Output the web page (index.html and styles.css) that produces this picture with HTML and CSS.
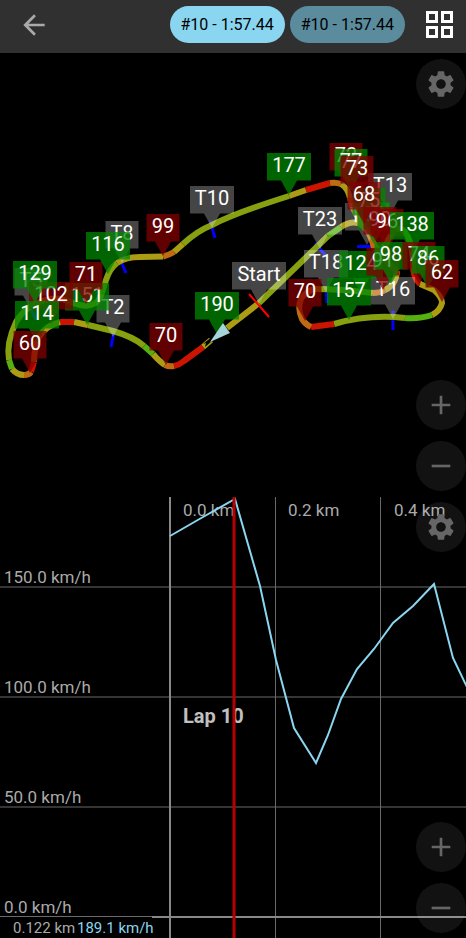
FILE: index.html
```
<!DOCTYPE html>
<html lang="en">
<head>
    <meta charset="UTF-8">
    <meta name="viewport" content="width=device-width, initial-scale=1.0">
    <title>Lap 10</title>
    <link rel="stylesheet" href="styles.css">
</head>
<body>
    <header class="topbar">
        <button type="button" class="icon-button back" aria-label="Back">
            <svg class="icon" viewBox="0 0 24 24"><path d="M20 11H7.83l5.59-5.59L12 4l-8 8 8 8 1.41-1.41L7.83 13H20z"/></svg>
        </button>
        <div class="laps">
            <button type="button" class="lap active">#10 - 1:57.44</button>
            <button type="button" class="lap">#10 - 1:57.44</button>
        </div>
        <button type="button" class="icon-button layout" aria-label="Layout">
            <svg class="layout-icon" viewBox="0 0 27 27"><path d="M1.5 1.5h9v9h-9zM16.5 1.5h9v9h-9zM1.5 16.5h9v9h-9zM16.5 16.5h9v9h-9z"/></svg>
        </button>
    </header>

    <main>
        <section class="panel">
            <svg class="map" viewBox="0 53 466 443" role="img" aria-label="Track map">
                <defs>
                    <path id="pin2" d="M-16.5-42h33v27.500h-8.500L0 0-8-14.500h-8.500z"/>
                    <path id="pin3" d="M-22-42h44v27.500h-14L0 0-8-14.500h-14z"/>
                    <path id="pinStart" d="M-27-42h54v27.500h-19L0 0-8-14.500h-19z"/>
                </defs>

                <!-- turn and start marks -->
                <path class="turn" d="M210 221l5 17M120 259l6 14M114 332l-3 15M28 303l8 17M315 243l11 13M326 286l1 17M393 311v19M357 246.500h17"/>

                <!-- track, coloured by acceleration -->
                <g class="track">
                    <path class="olive" d="M259 303L227 328M211 340L203 347"/>
                    <path class="red" d="M203 347L184 361Q179 365 174 366"/>
                    <path class="orange" d="M174 366Q169 367 165 365"/>
                    <path class="olive" d="M165 365Q160 362 153 354"/>
                    <path class="green" d="M153 354L144 346"/>
                    <path class="lime" d="M144 346Q134 337 113 331L88 325"/>
                    <path class="olive" d="M88 325L74 322"/>
                    <path class="red" d="M74 322H60"/>
                    <path class="olive" d="M60 322Q45 326 39 337"/>
                    <path class="orange" d="M39 337Q34 348 34 362"/>
                    <path class="red" d="M34 362L31 372"/>
                    <path class="orange" d="M31 372Q29 375 24 375"/>
                    <path class="olive" d="M24 375Q17 375 12 369"/>
                    <path class="green" d="M12 369L9 360"/>
                    <path class="lime" d="M9 360Q6 343 16 322 25 306 45 300"/>
                    <path class="orange" d="M45 300Q58 296 71 302"/>
                    <path class="lime" d="M71 302Q92 311 100 298 103 290 106 280 110 268 117 263"/>
                    <path class="olive" d="M117 263Q126 257 140 257L163 256.500"/>
                    <path class="orange" d="M163 256.500Q169 255 174 252"/>
                    <path class="olive" d="M174 252L183 244"/>
                    <path class="lime" d="M183 244Q197 231 212 225 235 213 289 196"/>
                    <path class="olive" d="M289 196L306 190"/>
                    <path class="red" d="M306 190L330 183"/>
                    <path class="orange" d="M330 183Q336 182 341 184"/>
                    <path class="olive" d="M341 184Q348 188 350 198"/>
                    <path class="orange" d="M350 198Q354 216 366 226L376 248"/>
                    <path class="green" d="M376 248Q384 250 388 240 396 222 405 232 412 241 413 262"/>
                    <path class="red" d="M413 262Q412 277 420 284"/>
                    <path class="olive" d="M420 284L434 290Q442 297 442 303 440 311 432 315"/>
                    <path class="green" d="M432 315Q420 319 405 318"/>
                    <path class="lime" d="M405 318Q369 314 334 324"/>
                    <path class="red" d="M334 324L311 327"/>
                    <path class="orange" d="M311 327Q306 325 302 319 297 308 301 299 306 291 315 289"/>
                    <path class="lime" d="M315 289Q340 289 373 293"/>
                    <path class="orange" d="M373 293Q380 293 385 290"/>
                    <path class="olive" d="M385 290Q396 285 397 271"/>
                    <path class="red" d="M397 271Q386 262 374 248"/>
                    <path class="orange" d="M374 248Q369 227 358 223"/>
                    <path class="olive" d="M358 223Q350 221 341 227"/>
                    <path class="green" d="M341 227L328 236"/>
                    <path class="lime" d="M328 236L259 303"/>
                </g>
                <path class="start-line" d="M249 294l20 23"/>

                <!-- turns -->
                <g class="pin turn-pin" transform="translate(31 310)"><use href="#pin2"/><text y="-23">T5</text></g>
                <g class="pin turn-pin" transform="translate(113 337)"><use href="#pin2"/><text y="-23">T2</text></g>
                <g class="pin turn-pin" transform="translate(122 263)"><use href="#pin2"/><text y="-23">T8</text></g>
                <g class="pin turn-pin" transform="translate(212 228)"><use href="#pin3"/><text y="-23">T10</text></g>
                <g class="pin turn-pin" transform="translate(390 215)"><use href="#pin3"/><text y="-23">T13</text></g>
                <g class="pin turn-pin" transform="translate(393 319)"><use href="#pin3"/><text y="-23">T16</text></g>
                <g class="pin turn-pin" transform="translate(326 292)"><use href="#pin3"/><text y="-23">T18</text></g>
                <g class="pin turn-pin" transform="translate(367 245)"><use href="#pin3"/><text y="-23">T19</text></g>
                <g class="pin turn-pin" transform="translate(320 249)"><use href="#pin3"/><text y="-23">T23</text></g>
                <g class="pin turn-pin" transform="translate(259 304)"><use href="#pinStart"/><text y="-23">Start</text></g>

                <!-- speeds -->
                <g class="pin fast" transform="translate(217 334)"><use href="#pin3"/><text y="-23">190</text></g>
                <g class="pin slow" transform="translate(166 365)"><use href="#pin2"/><text y="-23">70</text></g>
                <g class="pin fast" transform="translate(87 325)"><use href="#pin3"/><text y="-23">151</text></g>
                <g class="pin slow" transform="translate(51 324)"><use href="#pin3"/><text y="-23">102</text></g>
                <g class="pin slow" transform="translate(86 304)"><use href="#pin2"/><text y="-23">71</text></g>
                <g class="pin fast" transform="translate(35 303)"><use href="#pin3"/><text y="-23">129</text></g>
                <g class="pin fast" transform="translate(37 343)"><use href="#pin3"/><text y="-23">114</text></g>
                <g class="pin slow" transform="translate(30 373)"><use href="#pin2"/><text y="-23">60</text></g>
                <g class="pin fast" transform="translate(108 274)"><use href="#pin3"/><text y="-23">116</text></g>
                <g class="pin slow" transform="translate(163 256)"><use href="#pin2"/><text y="-23">99</text></g>
                <g class="pin fast" transform="translate(289 195)"><use href="#pin3"/><text y="-23">177</text></g>
                <g class="pin slow" transform="translate(346 185)"><use href="#pin2"/><text y="-23">72</text></g>
                <g class="pin fast" transform="translate(351 191)"><use href="#pin2"/><text y="-23">77</text></g>
                <g class="pin slow" transform="translate(357 198)"><use href="#pin2"/><text y="-23">73</text></g>
                <g class="pin fast" transform="translate(374 244)"><use href="#pin2"/><text y="-23">59</text></g>
                <g class="pin fast" transform="translate(369 230)"><use href="#pin2"/><text y="-23">75</text></g>
                <g class="pin slow" transform="translate(364 224)"><use href="#pin2"/><text y="-23">68</text></g>
                <g class="pin slow" transform="translate(380 249)"><use href="#pin2"/><text y="-23">90</text></g>
                <g class="pin slow" transform="translate(387 251)"><use href="#pin2"/><text y="-23">96</text></g>
                <g class="pin fast" transform="translate(412 254)"><use href="#pin3"/><text y="-23">138</text></g>
                <g class="pin fast" transform="translate(361 293)"><use href="#pin3"/><text y="-23">124</text></g>
                <g class="pin slow" transform="translate(383 290)"><use href="#pin2"/><text y="-23">91</text></g>
                <g class="pin fast" transform="translate(391 284)"><use href="#pin2"/><text y="-23">98</text></g>
                <g class="pin slow" transform="translate(419 284)"><use href="#pin2"/><text y="-23">74</text></g>
                <g class="pin fast" transform="translate(428 288)"><use href="#pin2"/><text y="-23">86</text></g>
                <g class="pin slow" transform="translate(442 302)"><use href="#pin2"/><text y="-23">62</text></g>
                <g class="pin fast" transform="translate(349 320)"><use href="#pin3"/><text y="-23">157</text></g>
                <g class="pin slow" transform="translate(305 321)"><use href="#pin2"/><text y="-23">70</text></g>

                <!-- current position -->
                <path class="notch" d="M213 336l-10 8 3-1-1 4 7-6z"/>
                <path class="car" d="M210 342l13-19 7 10z"/>
            </svg>
            <div class="controls">
                <button type="button" class="round" aria-label="Map settings">
                    <svg class="icon" viewBox="0 0 24 24"><use href="#gear"/></svg>
                </button>
                <button type="button" class="round zoom-in" aria-label="Zoom map in">
                    <svg class="icon" viewBox="0 0 24 24"><path d="M19 13h-6v6h-2v-6H5v-2h6V5h2v6h6z"/></svg>
                </button>
                <button type="button" class="round" aria-label="Zoom map out">
                    <svg class="icon" viewBox="0 0 24 24"><path d="M19 13H5v-2h14z"/></svg>
                </button>
            </div>
        </section>

        <section class="panel">
            <svg class="chart" viewBox="0 496 466 442" role="img" aria-label="Speed over distance">
                <path class="grid" d="M0 587h466M0 697h466M0 807h466M0 916.500h466M275.500 497v441M380.500 497v441"/>
                <path class="axis" d="M170 497v441M152 917h314"/>

                <text x="183" y="516">0.0 km</text>
                <text x="288" y="516">0.2 km</text>
                <text x="394" y="516">0.4 km</text>
                <text x="4" y="583">150.0 km/h</text>
                <text x="4" y="693">100.0 km/h</text>
                <text x="4" y="803">50.0 km/h</text>
                <text x="4" y="913">0.0 km/h</text>
                <text class="lap-name" x="183" y="723">Lap 10</text>
                <text class="value" x="13" y="933">0.122 km</text>
                <text class="value speed" x="77" y="933">189.1 km/h</text>

                <polyline class="line" points="170,536 203,517 235,499 260,586 276,660 294,728 316,763 328,735 341,699 357,669 374,649 393,623 413,606 434,584 453,658 467,687"/>
                <path class="cursor" d="M234 497v441"/>
            </svg>
            <div class="controls">
                <button type="button" class="round" aria-label="Chart settings">
                    <svg class="icon" viewBox="0 0 24 24"><path id="gear" d="M19.140 12.940c.040-.300.060-.610.060-.940 0-.320-.020-.640-.070-.940l2.030-1.580c.180-.140.230-.410.120-.610l-1.920-3.320c-.120-.220-.370-.290-.590-.220l-2.390.960c-.500-.380-1.030-.700-1.620-.940l-.360-2.540c-.040-.240-.240-.410-.480-.410h-3.840c-.240 0-.430.170-.470.410l-.360 2.540c-.590.240-1.130.570-1.620.940l-2.390-.960c-.220-.080-.470 0-.590.220L2.740 8.870c-.120.210-.080.470.120.610l2.030 1.580c-.050.300-.090.630-.090.940s.020.640.070.940l-2.030 1.580c-.180.140-.230.410-.120.610l1.920 3.320c.120.220.370.290.590.220l2.390-.960c.500.380 1.030.700 1.620.940l.360 2.540c.050.240.240.410.480.410h3.840c.240 0 .440-.170.470-.410l.360-2.540c.590-.240 1.130-.560 1.620-.940l2.390.960c.220.080.470 0 .590-.220l1.920-3.320c.120-.220.070-.470-.120-.610zM12 15.600c-1.980 0-3.600-1.620-3.600-3.600s1.620-3.600 3.600-3.600 3.600 1.620 3.600 3.600-1.620 3.600-3.600 3.600z"/></svg>
                </button>
                <button type="button" class="round zoom-in" aria-label="Zoom chart in">
                    <svg class="icon" viewBox="0 0 24 24"><path d="M19 13h-6v6h-2v-6H5v-2h6V5h2v6h6z"/></svg>
                </button>
                <button type="button" class="round" aria-label="Zoom chart out">
                    <svg class="icon" viewBox="0 0 24 24"><path d="M19 13H5v-2h14z"/></svg>
                </button>
            </div>
        </section>
    </main>
</body>
</html>
```
FILE: styles.css
```
* {
    box-sizing: border-box;
}
body {
    margin: 0;
    background-color: #000;
    font-family: Roboto, "Liberation Sans", sans-serif;
    color: #aaa;
}
button {
    border: none;
    padding: 0;
    font-family: inherit;
    cursor: pointer;
}
.topbar {
    display: flex;
    align-items: center;
    height: 53px;
    padding: 0 13px 4px 18px;
    background-color: #303030;
}
.icon-button {
    display: flex;
    background: none;
}
.icon {
    width: 32px;
    height: 32px;
    fill: currentColor;
}
.back {
    color: #aaa;
}
.laps {
    display: flex;
    gap: 5px;
    margin-left: auto;
    margin-right: 21px;
}
.lap {
    height: 37px;
    padding: 0 11px;
    border-radius: 19px;
    background-color: #5b8c9e;
    color: #000;
    font-size: 16px;
}
.lap.active {
    background-color: #8ad6f0;
}
.layout-icon {
    width: 27px;
    height: 27px;
    fill: none;
    stroke: #fff;
    stroke-width: 3;
}

.panel {
    position: relative;
}
.map, .chart {
    display: block;
    width: 100%;
    height: auto;
}
/* buttons lie over the map and the chart */
.controls {
    position: absolute;
    top: 0;
    right: 0;
    bottom: 0;
    display: flex;
    flex-direction: column;
    gap: 11px;
    padding: 6px 0 5px;
}
.round {
    display: flex;
    align-items: center;
    justify-content: center;
    width: 50px;
    height: 50px;
    border-radius: 50%;
    background-color: rgba(255, 255, 255, 0.07);
    color: #666;
}
.zoom-in {
    margin-top: auto;
}

/* map */
.track {
    fill: none;
    stroke-width: 6;
}
.lime { stroke: #86a010; }
.green { stroke: #55b010; }
.olive { stroke: #ac9c14; }
.orange { stroke: #c06a14; }
.red { stroke: #cc1400; }
.turn {
    stroke: #00f;
    stroke-width: 3;
}
.start-line {
    stroke: #f00;
    stroke-width: 2;
}
.pin text {
    fill: #fff;
    font-size: 20px;
    text-anchor: middle;
}
.turn-pin { fill: rgba(255, 255, 255, 0.27); }
.fast { fill: rgba(0, 135, 0, 0.75); }
.slow { fill: rgba(130, 0, 0, 0.75); }
.car { fill: #a5d5d8; }
.notch { fill: #000; }

/* chart */
.chart text {
    fill: #aaa;
    font-size: 17px;
}
.chart .lap-name {
    fill: #c0c0c0;
    font-size: 20px;
    font-weight: bold;
}
.chart .value {
    font-size: 15px;
}
.chart .speed {
    fill: #8ad6f0;
}
.grid {
    stroke: #6a6a6a;
    stroke-width: 1;
}
.axis {
    stroke: #888;
    stroke-width: 2;
}
.line {
    fill: none;
    stroke: #8ad6f0;
    stroke-width: 2;
}
.cursor {
    stroke: #b40000;
    stroke-width: 3;
}
```
